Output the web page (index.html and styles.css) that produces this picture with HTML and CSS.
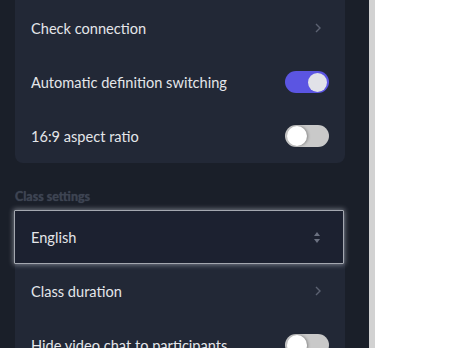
FILE: index.html
```html
<!DOCTYPE html>
<html lang="en">
<head>
    <meta charset="UTF-8">
    <title>Settings</title>
    <link rel="stylesheet" href="styles.css">
</head>
<body>
    <div class="panel">
        <div class="card card-top">
            <div class="row">
                <span>Check connection</span>
                <svg class="chevron" width="6" height="10" viewBox="0 0 6 10">
                    <path d="M1 1 L5 5 L1 9" fill="none" stroke="#5c6272" stroke-width="1.4"/>
                </svg>
            </div>
            <div class="row">
                <span>Automatic definition switching</span>
                <span class="toggle on"><span class="knob"></span></span>
            </div>
            <div class="row">
                <span>16:9 aspect ratio</span>
                <span class="toggle"><span class="knob"></span></span>
            </div>
        </div>

        <div class="section-title">Class settings</div>

        <div class="card">
            <div class="row select">
                <span>English</span>
                <svg class="updown" width="6" height="11" viewBox="0 0 6 11">
                    <path d="M3 0 L6 4 L0 4 Z" fill="#6b7180"/>
                    <path d="M0 7 L6 7 L3 11 Z" fill="#6b7180"/>
                </svg>
            </div>
            <div class="row">
                <span>Class duration</span>
                <svg class="chevron" width="6" height="10" viewBox="0 0 6 10">
                    <path d="M1 1 L5 5 L1 9" fill="none" stroke="#5c6272" stroke-width="1.4"/>
                </svg>
            </div>
            <div class="row">
                <span>Hide video chat to participants</span>
                <span class="toggle"><span class="knob"></span></span>
            </div>
        </div>
    </div>
    <div class="scrollbar"></div>
    <div class="blank"></div>
</body>
</html>
```

FILE: styles.css
```css
body {
    margin: 0;
    display: flex;
    height: 348px;
    overflow: hidden;
    font-family: 'Lato', 'Open Sans', sans-serif;
    color: #e4e6ea;
    background: #fff;
}
.panel {
    width: 369px;
    box-sizing: border-box;
    padding: 0 24px 0 15px;
    background: #1a1f29;
}
.scrollbar {
    width: 6px;
    background: #d2d2d2;
}
.blank {
    flex: 1;
    background: #fff;
}
.card {
    background: #222836;
    border-radius: 8px;
}
.card-top {
    margin-top: -10px;
    padding-top: 11px;
}
.row {
    height: 54px;
    display: flex;
    align-items: center;
    justify-content: space-between;
    padding: 0 16px;
    font-size: 14.6px;
}
.chevron {
    margin-right: 8px;
}
.toggle {
    width: 44px;
    height: 22px;
    border-radius: 11px;
    background: #c9c9c9;
    display: flex;
    align-items: center;
    padding: 0 2px;
    box-sizing: border-box;
}
.toggle .knob {
    width: 20px;
    height: 20px;
    border-radius: 50%;
    background: #fff;
    box-shadow: 1px 0 3px rgba(0,0,0,0.35);
}
.toggle.on {
    background: #5b55e2;
    justify-content: flex-end;
}
.toggle.on .knob {
    width: 19px;
    height: 19px;
    background: #e1e2e8;
    box-shadow: none;
}
.section-title {
    margin: 27px 0 6px;
    font-size: 12.5px;
    font-weight: bold;
    color: #3d4452;
    line-height: 14px;
    text-shadow: 0 0 1px #3d4452;
}
.select {
    background: #1c2130;
    border: 1px solid #a4a8b0;
    box-shadow: 0 0 5px 1px rgba(220,225,235,0.45);
    margin-left: -1px;
    width: 330px;
    box-sizing: border-box;
    padding-left: 16px;
    border-radius: 1px;
}
.updown {
    margin-right: 7px;
}
```
